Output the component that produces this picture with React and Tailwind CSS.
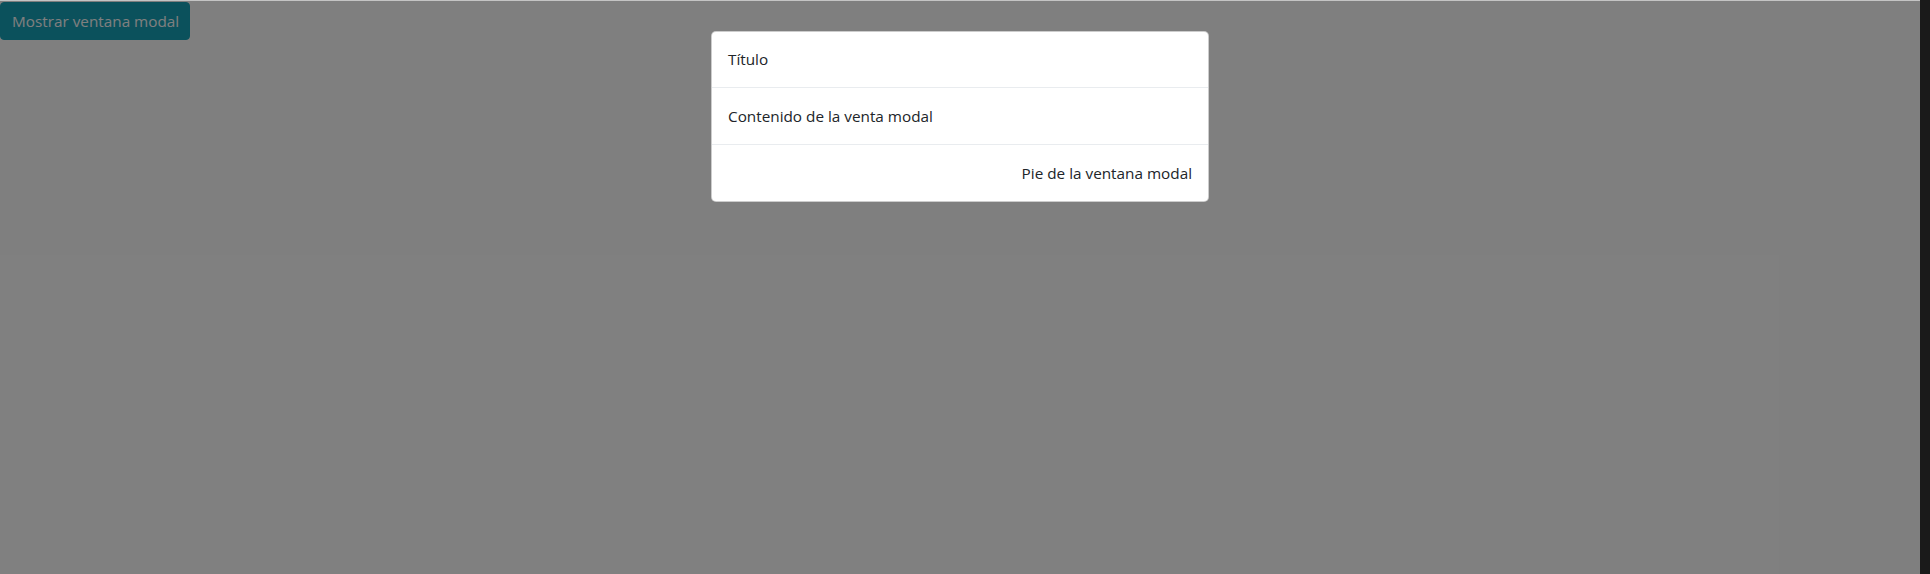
export default function App() {
  return (
    <div
      className="relative h-[574px] w-full overflow-hidden bg-white text-[15.3px] text-[#212529]"
      style={{ fontFamily: '"Segoe UI", "Open Sans", sans-serif' }}
    >
      <div className="flex h-full">
        <div className="relative flex-1">
          <button className="mt-[2px] h-[38px] whitespace-nowrap rounded-[4px] border border-[#17a2b8] bg-[#17a2b8] pl-[11px] pr-[10px] leading-[24px] text-white">
            Mostrar ventana modal
          </button>

          {/* backdrop */}
          <div className="absolute inset-x-0 bottom-0 top-[1px] bg-black/50" />
          <div className="absolute inset-x-0 top-0 h-[1px] bg-[#c4c4c4]" />

          {/* modal */}
          <div className="absolute inset-x-0 top-[31px] flex justify-center">
            <div className="w-[498px] rounded-[5px] border border-black/20 bg-white">
              <div className="border-b border-[#e9ecef] px-[16px] py-[16px] leading-[23px]">
                Título
              </div>
              <div className="border-b border-[#e9ecef] px-[16px] py-[16px] leading-[24px]">
                Contenido de la venta modal
              </div>
              <div className="flex justify-end px-[16px] py-[16px] leading-[24px]">
                Pie de la ventana modal
              </div>
            </div>
          </div>
        </div>
        <div className="w-[10px] shrink-0 bg-[#1a1a1a]" />
      </div>
    </div>
  );
}
